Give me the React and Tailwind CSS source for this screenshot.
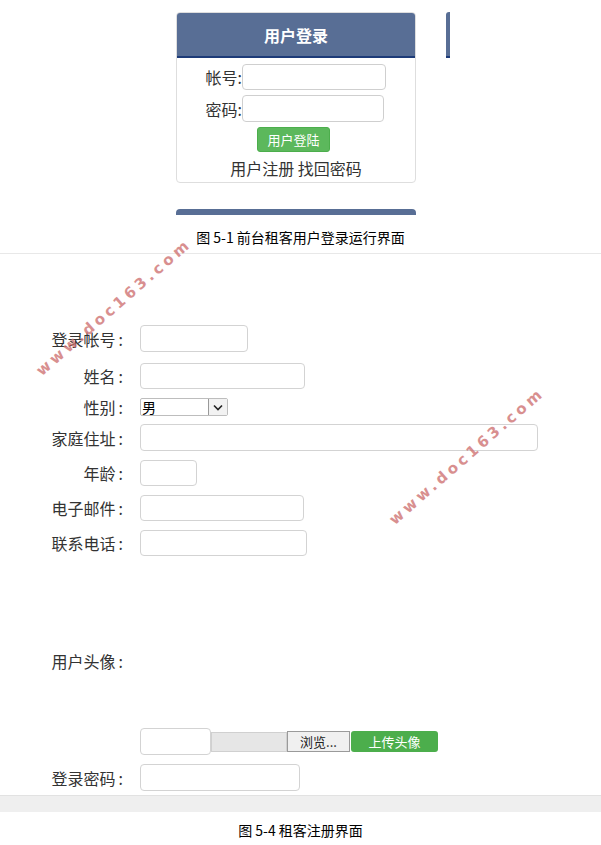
import React from 'react';

const cjk = { fontFamily: "'Noto Sans CJK SC', 'Noto Sans', sans-serif" };

const Field = ({ w, h = 'h-[27px]' }) => (
  <div className={`${w} ${h} rounded-[4px] border border-[#d3d3d3] bg-white`} />
);

const Row = ({ label, mt, children }) => (
  <div className={`flex items-center ${mt}`}>
    <div className="w-[123px] text-right text-[16px] leading-none text-[#333] whitespace-nowrap">
      {label}
      <span className="ml-[3px]">:</span>
    </div>
    <div className="ml-[17px] flex items-center">{children}</div>
  </div>
);

const Watermark = ({ className }) => (
  <div
    className={`pointer-events-none absolute text-[15px] font-bold tracking-[3.7px] text-[#cf7474] opacity-80 -rotate-[41deg] whitespace-nowrap ${className}`}
    style={{ fontFamily: "'DejaVu Sans', sans-serif" }}
  >
    www.doc163.com
  </div>
);

export default function App() {
  return (
    <div className="relative w-[601px] h-[845px] overflow-hidden bg-white" style={cjk}>
      {/* Figure 5-1 */}
      <div className="h-[254px] border-b border-[#e8e8e8] pt-[12px]">
        <div className="flex items-start">
          <div className="ml-[176px] w-[240px] h-[171px] rounded-[4px] border border-[#dedede] overflow-hidden">
            <div className="h-[45px] bg-[#586e95] border-b-2 border-[#1d3b78] flex items-center justify-center text-white text-[16px] font-bold">
              用户登录
            </div>
            <div className="flex items-center mt-[6px]">
              <div className="w-[65px] text-right text-[16px] text-[#333] leading-none">帐号:</div>
              <div className="w-[144px] h-[26px] rounded-[4px] border border-[#cfcfcf]" />
            </div>
            <div className="flex items-center mt-[5px]">
              <div className="w-[65px] text-right text-[16px] text-[#333] leading-none">密码:</div>
              <div className="w-[142px] h-[27px] rounded-[4px] border border-[#cfcfcf]" />
            </div>
            <div className="mt-[5px] ml-[80px] w-[73px] h-[25px] rounded-[3px] bg-[#5cb85c] border border-[#4cae4c] flex items-center justify-center text-white text-[13px]">
              用户登陆
            </div>
            <div className="mt-[8px] text-center text-[16px] text-[#333] leading-none">用户注册 找回密码</div>
          </div>
          <div className="ml-[30px] w-[4px] h-[46px] rounded-tl-[3px] bg-[#586e95] border-b-2 border-[#1d3b78]" />
        </div>
        <div className="ml-[176px] mt-[26px] w-[240px] h-[6px] rounded-t-[4px] bg-[#586e95]" />
        <div className="mt-[12px] h-[20px] flex items-center justify-center text-[14px] text-black">
          图 5-1 前台租客用户登录运行界面
        </div>
      </div>

      {/* Figure 5-4 */}
      <div className="pt-[71px] h-[541px]">
        <Row label="登录帐号">
          <Field w="w-[108px]" />
        </Row>
        <Row label="姓名" mt="mt-[11px]">
          <Field w="w-[165px]" h="h-[26px]" />
        </Row>
        <Row label="性别" mt="mt-[9px]">
          <div className="w-[88px] h-[18px] border border-[#bdbdbd] rounded-[2px] flex items-center justify-between bg-white">
            <span className="pl-[1px] text-[14px] leading-none text-black">男</span>
            <span className="w-[19px] h-[16px] border-l border-[#999] bg-[#f2f2f2] flex items-center justify-center">
              <svg width="10" height="7" viewBox="0 0 10 7">
                <path d="M1 1.5 L5 5.5 L9 1.5" fill="none" stroke="#222" strokeWidth="1.6" />
              </svg>
            </span>
          </div>
        </Row>
        <Row label="家庭住址" mt="mt-[8px]">
          <Field w="w-[398px]" />
        </Row>
        <Row label="年龄" mt="mt-[9px]">
          <Field w="w-[57px]" h="h-[26px]" />
        </Row>
        <Row label="电子邮件" mt="mt-[9px]">
          <Field w="w-[164px]" h="h-[26px]" />
        </Row>
        <Row label="联系电话" mt="mt-[9px]">
          <Field w="w-[167px]" h="h-[26px]" />
        </Row>
        <Row label="用户头像" mt="mt-[97px]">
          <div className="h-[15px]" />
        </Row>
        <div className="flex items-center mt-[59px] ml-[140px]">
          <Field w="w-[71px]" />
          <div className="w-[76px] h-[20px] bg-[#e6e6e6] border border-[#d0d0d0]" />
          <div className="w-[63px] h-[21px] bg-[#f0f0f0] border border-[#9a9a9a] flex items-center justify-center text-[13px] text-[#222]">
            浏览...
          </div>
          <div className="ml-[1px] w-[87px] h-[21px] rounded-[3px] bg-[#4cae4c] flex items-center justify-center text-[13px] text-white">
            上传头像
          </div>
        </div>
        <Row label="登录密码" mt="mt-[9px]">
          <Field w="w-[160px]" />
        </Row>
      </div>
      <div className="h-[17px] bg-[#efefef] border-t border-[#e2e2e2]" />
      <div className="mt-[8px] h-[20px] flex items-center justify-center text-[14px] text-black">
        图 5-4 租客注册界面
      </div>

      <Watermark className="left-[14px] top-[296px]" />
      <Watermark className="left-[367px] top-[445px]" />
    </div>
  );
}
